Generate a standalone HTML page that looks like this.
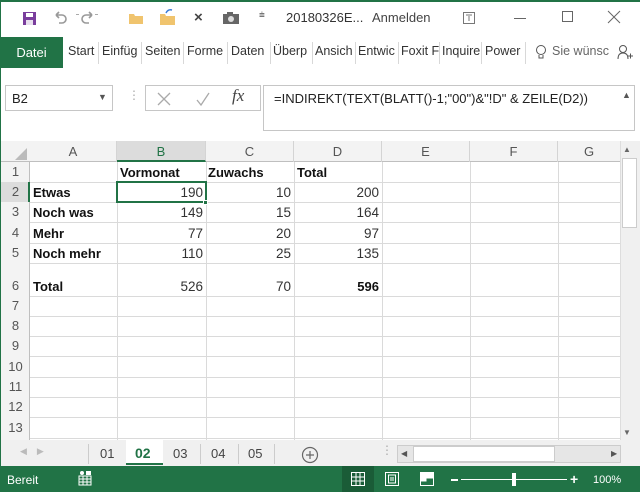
<!DOCTYPE html>
<html><head><meta charset="utf-8"><style>
*{margin:0;padding:0;box-sizing:border-box}
body{width:640px;height:492px;overflow:hidden;background:#fff;font-family:"Liberation Sans",sans-serif;position:relative;font-size:12px;color:#222}
.a{position:absolute}
.tab{position:absolute;top:44px;font-size:12.5px;color:#333}
.sep{position:absolute;top:42px;width:1px;height:22px;background:#d8d8d8}
.rh{position:absolute;left:1px;width:29px;text-align:center;font-size:13px;color:#555}
.ch{position:absolute;top:141px;height:21px;text-align:center;font-size:13px;color:#555;line-height:21px;border-right:1px solid #d4d4d4}
.vl{position:absolute;top:162px;height:278px;width:1px;background:#dadada}
.hl{position:absolute;left:30px;width:590px;height:1px;background:#dadada}
.c{position:absolute;font-size:13.5px;font-family:"Liberation Sans",sans-serif;color:#333}
.b{font-weight:bold;color:#111;font-size:13px}
.r{text-align:right}
</style></head><body>
<div class="a" style="left:0;top:0;width:640px;height:2px;background:#217346"></div>
<div class="a" style="left:0;top:0;width:1px;height:492px;background:#217346"></div>
<!-- title bar -->
<svg class="a" style="left:22px;top:11px" width="16" height="16"><rect x="1" y="1" width="13" height="13" fill="#7a3e9d"/><rect x="4" y="2" width="7" height="4" fill="#fff"/><rect x="4" y="9" width="7" height="5" fill="#e8e0ee"/></svg>
<svg class="a" style="left:54px;top:10px" width="14" height="14" fill="none" stroke="#999" stroke-width="1.6"><path d="M2 5h6a4 4 0 0 1 0 8h-3M2 5l3-3M2 5l3 3"/></svg>
<div class="a" style="left:76px;top:14px;width:3px;height:1px;background:#aaa"></div>
<svg class="a" style="left:80px;top:10px" width="14" height="14" fill="none" stroke="#999" stroke-width="1.6"><path d="M12 5h-6a4 4 0 0 0 0 8h3M12 5l-3-3M12 5l-3 3"/></svg>
<div class="a" style="left:95px;top:14px;width:3px;height:1px;background:#aaa"></div>
<svg class="a" style="left:128px;top:11px" width="16" height="14"><path d="M1 3h5l1 2h8v8H1z" fill="#f0c46e"/></svg>
<svg class="a" style="left:159px;top:8px" width="18" height="18"><path d="M1 6h5l1 2h9v9H1z" fill="#f0c46e"/><path d="M7 5 q2 -4 6 -3" stroke="#3b7dd8" fill="none" stroke-width="1.5"/></svg>
<div class="a" style="left:194px;top:9px;font-size:15px;font-weight:bold;color:#444">×</div>
<svg class="a" style="left:222px;top:11px" width="18" height="14"><rect x="1" y="3" width="16" height="10" fill="#666"/><rect x="5" y="1" width="6" height="3" fill="#666"/><circle cx="9" cy="8" r="3" fill="#ddd"/></svg>
<div class="a" style="left:259px;top:10px;color:#777;font-size:10px">⩧</div>
<div class="a" style="left:286px;top:10px;font-size:13px;color:#333">20180326E...</div>
<div class="a" style="left:372px;top:10px;font-size:13px;color:#444">Anmelden</div>
<svg class="a" style="left:462px;top:11px" width="14" height="14" fill="none" stroke="#777"><rect x="1.5" y="1.5" width="11" height="11"/><path d="M4 4h6M7 5v5"/></svg>
<div class="a" style="left:514px;top:18px;width:12px;height:1px;background:#666"></div>
<div class="a" style="left:562px;top:11px;width:11px;height:11px;border:1px solid #666"></div>
<svg class="a" style="left:607px;top:10px" width="14" height="14" stroke="#666"><path d="M1 1L13 13M13 1L1 13"/></svg>
<!-- ribbon -->
<div class="a" style="left:0;top:37px;width:63px;height:31px;background:#217346;color:#fff;font-size:13px;line-height:31px;text-align:center">Datei</div>
<div class="tab" style="left:68px">Start</div><div class="sep" style="left:98px"></div>
<div class="tab" style="left:102px">Einfüg</div><div class="sep" style="left:141px"></div>
<div class="tab" style="left:145px">Seiten</div><div class="sep" style="left:183px"></div>
<div class="tab" style="left:187px">Forme</div><div class="sep" style="left:227px"></div>
<div class="tab" style="left:231px">Daten</div><div class="sep" style="left:270px"></div>
<div class="tab" style="left:273px">Überp</div><div class="sep" style="left:312px"></div>
<div class="tab" style="left:315px">Ansich</div><div class="sep" style="left:355px"></div>
<div class="tab" style="left:358px">Entwic</div><div class="sep" style="left:398px"></div>
<div class="tab" style="left:401px">Foxit F</div><div class="sep" style="left:439px"></div>
<div class="tab" style="left:442px">Inquire</div><div class="sep" style="left:481px"></div>
<div class="tab" style="left:485px">Power</div><div class="sep" style="left:525px"></div>
<svg class="a" style="left:535px;top:44px" width="12" height="16" fill="none" stroke="#555"><circle cx="6" cy="6" r="4.5"/><path d="M4 11v3h4v-3"/></svg>
<div class="tab" style="left:552px;color:#666">Sie wünsc</div>
<svg class="a" style="left:617px;top:44px" width="16" height="16" fill="none" stroke="#555"><circle cx="6" cy="5" r="3.5"/><path d="M1 15q0 -6 5 -6q5 0 5 6M11 12h5M13.5 9.5v5"/></svg>
<!-- formula bar -->
<div class="a" style="left:5px;top:85px;width:108px;height:26px;border:1px solid #c6c6c6;background:#fff"></div>
<div class="a" style="left:12px;top:91px;font-size:13px">B2</div>
<div class="a" style="left:98px;top:92px;font-size:9px;color:#555">▼</div>
<div class="a" style="left:128px;top:88px;color:#aaa;font-size:12px">⋮</div>
<div class="a" style="left:145px;top:85px;width:116px;height:26px;border:1px solid #c6c6c6;background:#fff"></div>
<svg class="a" style="left:155px;top:91px" width="80" height="16" stroke="#aaa" fill="none" stroke-width="1.3"><path d="M3 2L15 14M15 2L3 14"/><path d="M42 9l4 5l8 -12"/></svg>
<div class="a" style="left:232px;top:86px;font-family:'Liberation Serif',serif;font-style:italic;font-size:17px;color:#444">fx</div>
<div class="a" style="left:263px;top:85px;width:372px;height:46px;border:1px solid #c6c6c6;background:#fff"></div>
<div class="a" style="left:274px;top:91px;font-size:13px;color:#222">=INDIREKT(TEXT(BLATT()-1;"00")&amp;"!D" &amp; ZEILE(D2))</div>
<div class="a" style="left:622px;top:90px;font-size:9px;color:#555">▲</div>
<!-- grid headers -->
<div class="a" style="left:1px;top:141px;width:619px;height:21px;background:#f3f3f3;border-bottom:1px solid #bfbfbf"></div>
<svg class="a" style="left:14px;top:147px" width="14" height="14"><path d="M13 1V13H1z" fill="#bbb"/></svg>
<div class="ch" style="left:30px;width:87px">A</div>
<div class="ch" style="left:117px;width:89px;background:#dcdcdc;border-bottom:2px solid #217346;color:#217346">B</div>
<div class="ch" style="left:206px;width:88px">C</div>
<div class="ch" style="left:294px;width:88px">D</div>
<div class="ch" style="left:382px;width:88px">E</div>
<div class="ch" style="left:470px;width:88px">F</div>
<div class="ch" style="left:558px;width:62px;border-right:none">G</div>
<div class="a" style="left:1px;top:162px;width:29px;height:278px;background:#f3f3f3;border-right:1px solid #bfbfbf"></div>
<div class="a" style="left:1px;top:182px;width:29px;height:20px;background:#dcdcdc;border-right:2px solid #217346"></div>
<div class="rh" style="top:164px">1</div><div class="rh" style="top:184px">2</div><div class="rh" style="top:204px">3</div><div class="rh" style="top:225px">4</div><div class="rh" style="top:245px">5</div><div class="rh" style="top:278px">6</div><div class="rh" style="top:298px">7</div><div class="rh" style="top:318px">8</div><div class="rh" style="top:338px">9</div><div class="rh" style="top:359px">10</div><div class="rh" style="top:379px">11</div><div class="rh" style="top:399px">12</div><div class="rh" style="top:420px">13</div>
<div class="vl" style="left:117px"></div><div class="vl" style="left:206px"></div><div class="vl" style="left:294px"></div><div class="vl" style="left:382px"></div><div class="vl" style="left:470px"></div><div class="vl" style="left:558px"></div>
<div class="hl" style="top:182px"></div><div class="hl" style="top:202px"></div><div class="hl" style="top:222px"></div><div class="hl" style="top:243px"></div><div class="hl" style="top:263px"></div><div class="hl" style="top:296px"></div><div class="hl" style="top:316px"></div><div class="hl" style="top:336px"></div><div class="hl" style="top:356px"></div><div class="hl" style="top:377px"></div><div class="hl" style="top:397px"></div><div class="hl" style="top:417px"></div><div class="hl" style="top:438px"></div>
<!-- cells -->
<div class="c b" style="left:120px;top:165px">Vormonat</div>
<div class="c b" style="left:208px;top:165px">Zuwachs</div>
<div class="c b" style="left:297px;top:165px">Total</div>
<div class="c b" style="left:33px;top:185px">Etwas</div>
<div class="c b" style="left:33px;top:205px">Noch was</div>
<div class="c b" style="left:33px;top:226px">Mehr</div>
<div class="c b" style="left:33px;top:246px">Noch mehr</div>
<div class="c b" style="left:33px;top:279px">Total</div>
<div class="c r" style="left:120px;width:83px;top:185px">190</div>
<div class="c r" style="left:120px;width:83px;top:205px">149</div>
<div class="c r" style="left:120px;width:83px;top:226px">77</div>
<div class="c r" style="left:120px;width:83px;top:246px">110</div>
<div class="c r" style="left:120px;width:83px;top:279px">526</div>
<div class="c r" style="left:208px;width:83px;top:185px">10</div>
<div class="c r" style="left:208px;width:83px;top:205px">15</div>
<div class="c r" style="left:208px;width:83px;top:226px">20</div>
<div class="c r" style="left:208px;width:83px;top:246px">25</div>
<div class="c r" style="left:208px;width:83px;top:279px">70</div>
<div class="c r" style="left:296px;width:83px;top:185px">200</div>
<div class="c r" style="left:296px;width:83px;top:205px">164</div>
<div class="c r" style="left:296px;width:83px;top:226px">97</div>
<div class="c r" style="left:296px;width:83px;top:246px">135</div>
<div class="c r b" style="left:296px;width:83px;top:279px">596</div>
<div class="a" style="left:116px;top:181px;width:91px;height:22px;border:2px solid #217346"></div>
<div class="a" style="left:203px;top:200px;width:5px;height:5px;background:#217346;border:1px solid #fff"></div>
<!-- vertical scrollbar -->
<div class="a" style="left:620px;top:141px;width:20px;height:299px;background:#f0f0f0;border-left:1px solid #ddd"></div>
<div class="a" style="left:623px;top:145px;font-size:8px;color:#666">▲</div>
<div class="a" style="left:622px;top:158px;width:15px;height:70px;background:#fff;border:1px solid #ccc"></div>
<div class="a" style="left:623px;top:428px;font-size:8px;color:#666">▼</div>
<!-- sheet tabs -->
<div class="a" style="left:1px;top:440px;width:639px;height:26px;background:#f0f0f0"></div>
<div class="a" style="left:20px;top:446px;font-size:9px;color:#bbb">◀ &nbsp;&nbsp; ▶</div>
<div class="a" style="left:88px;top:444px;width:1px;height:20px;background:#ccc"></div>
<div class="a" style="left:100px;top:446px;font-size:13px;color:#444">01</div>
<div class="a" style="left:126px;top:440px;width:37px;height:25px;background:#fff;border-bottom:2px solid #217346"></div>
<div class="a" style="left:135px;top:445px;font-size:14px;font-weight:bold;color:#217346">02</div>
<div class="a" style="left:173px;top:446px;font-size:13px;color:#444">03</div><div class="a" style="left:200px;top:444px;width:1px;height:20px;background:#ccc"></div>
<div class="a" style="left:211px;top:446px;font-size:13px;color:#444">04</div><div class="a" style="left:238px;top:444px;width:1px;height:20px;background:#ccc"></div>
<div class="a" style="left:248px;top:446px;font-size:13px;color:#444">05</div><div class="a" style="left:274px;top:444px;width:1px;height:20px;background:#ccc"></div>
<svg class="a" style="left:301px;top:446px" width="18" height="18" fill="none" stroke="#666" stroke-width="1.2"><circle cx="9" cy="9" r="7.5"/><path d="M9 5v8M5 9h8"/></svg>
<div class="a" style="left:381px;top:443px;color:#aaa;font-size:12px">⋮</div>
<div class="a" style="left:397px;top:445px;width:224px;height:18px;border:1px solid #ccc;background:#e6e6e6"></div>
<div class="a" style="left:413px;top:446px;width:142px;height:16px;background:#fff;border:1px solid #ccc"></div>
<div class="a" style="left:401px;top:449px;font-size:8px;color:#555">◀</div>
<div class="a" style="left:611px;top:449px;font-size:8px;color:#555">▶</div>
<!-- status bar -->
<div class="a" style="left:0;top:466px;width:640px;height:26px;background:#217346"></div>
<div class="a" style="left:7px;top:473px;font-size:12px;color:#fff">Bereit</div>
<svg class="a" style="left:78px;top:470px" width="14" height="16" fill="#fff"><rect x="1" y="6" width="12" height="9" fill="none" stroke="#fff"/><path d="M1 9h12M1 12h12M5 6v9M9 6v9" stroke="#fff"/><circle cx="4" cy="3" r="2"/><rect x="8" y="1" width="5" height="4"/></svg>
<div class="a" style="left:342px;top:466px;width:32px;height:26px;background:#1a5c37"></div>
<svg class="a" style="left:350px;top:471px" width="16" height="16" fill="none" stroke="#fff"><rect x="1.5" y="1.5" width="13" height="13"/><path d="M1.5 6h13M1.5 10h13M6 1.5v13M10 1.5v13"/></svg>
<svg class="a" style="left:384px;top:471px" width="16" height="16" fill="none" stroke="#fff"><rect x="1.5" y="1.5" width="13" height="13"/><rect x="4.5" y="4" width="7" height="8"/><path d="M6 7h4M6 9h4"/></svg>
<svg class="a" style="left:419px;top:471px" width="16" height="16" fill="none" stroke="#fff"><rect x="1.5" y="1.5" width="13" height="13"/><rect x="2" y="2" width="5" height="8" fill="#fff"/><rect x="8" y="2" width="6" height="5" fill="#fff"/></svg>
<div class="a" style="left:451px;top:479px;width:7px;height:2px;background:#fff"></div>
<div class="a" style="left:461px;top:479px;width:106px;height:1px;background:#fff"></div>
<div class="a" style="left:512px;top:473px;width:4px;height:13px;background:#fff"></div>
<div class="a" style="left:570px;top:471px;font-size:14px;font-weight:bold;color:#fff">+</div>
<div class="a" style="left:593px;top:474px;font-size:11px;color:#fff">100%</div>
</body></html>
